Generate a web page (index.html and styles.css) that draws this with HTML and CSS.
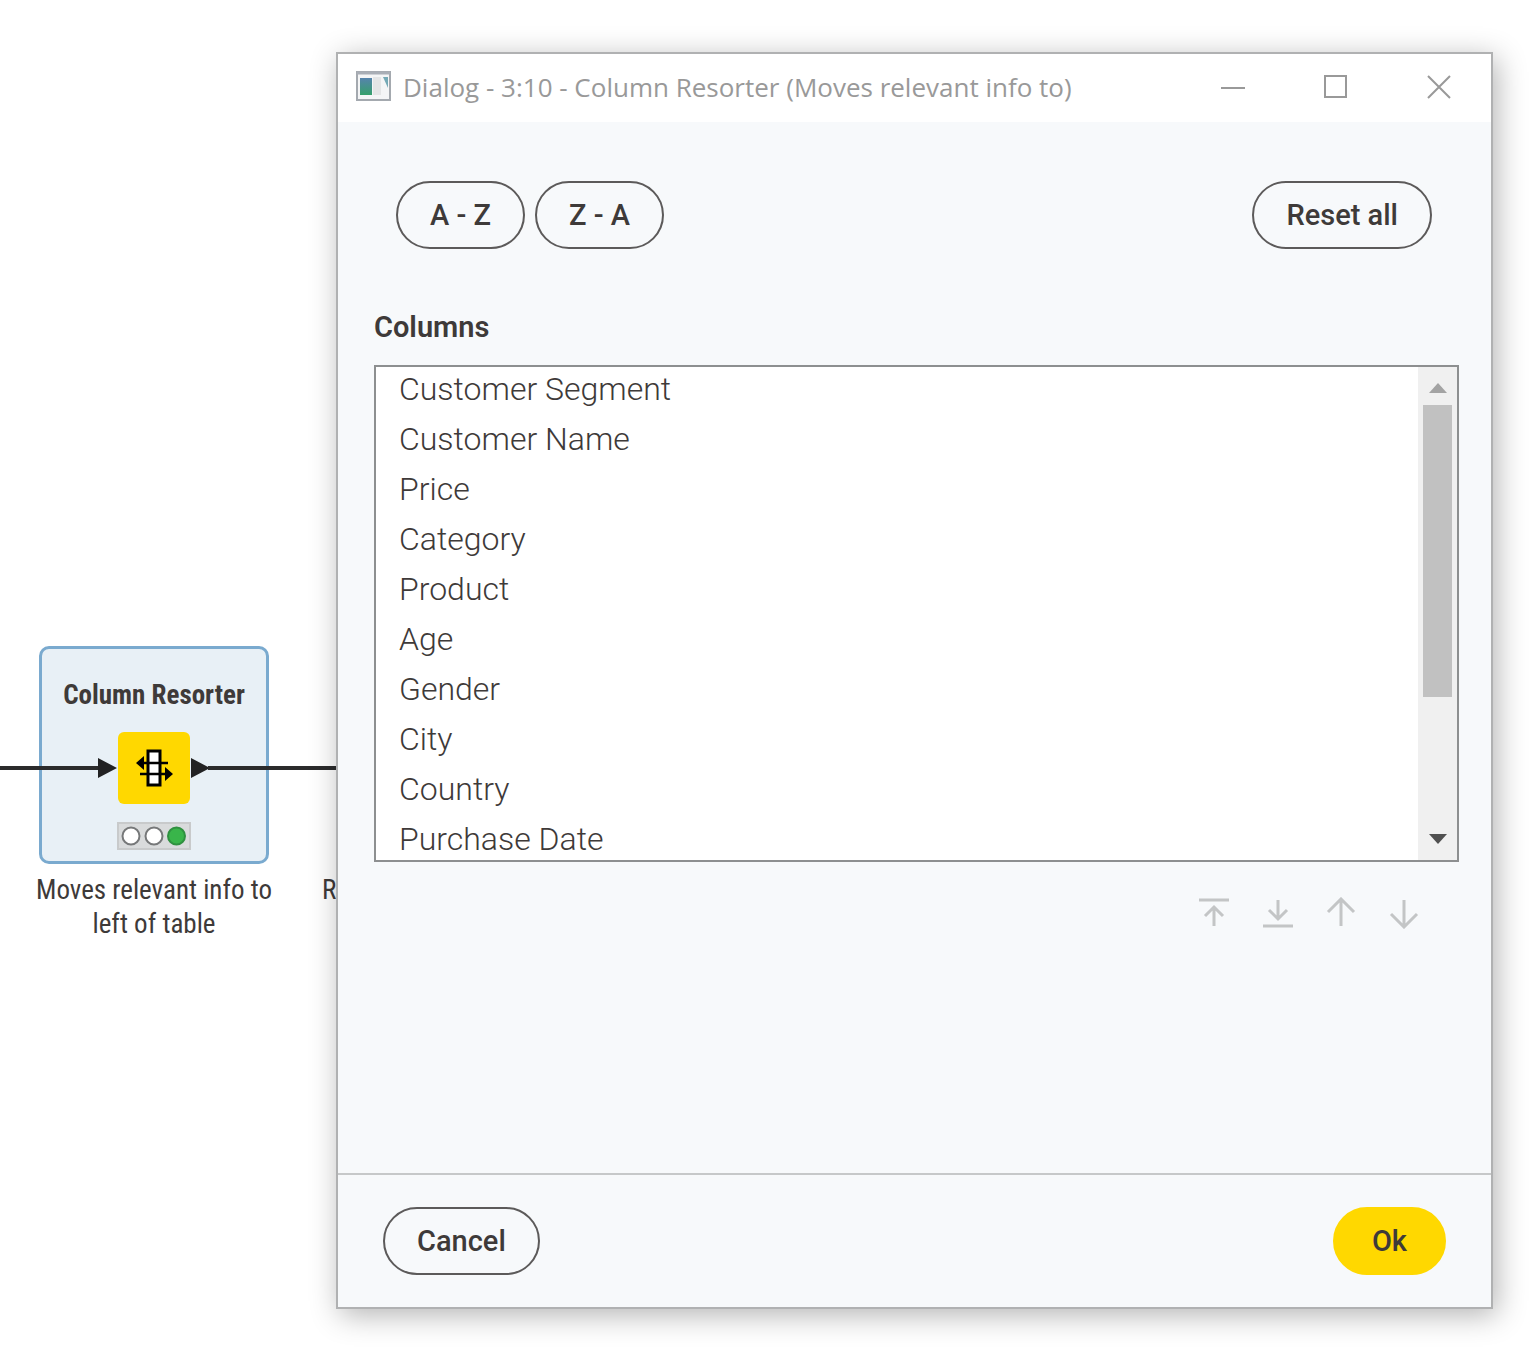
FILE: index.html
```html
<!DOCTYPE html>
<html lang="en">
<head>
<meta charset="utf-8">
<title>Column Resorter</title>
<link rel="stylesheet" href="styles.css">
</head>
<body>
<div class="workspace">
  <div class="canvas">
    <div class="node">
      <div class="node-box">
        <div class="node-name">Column Resorter</div>
        <svg class="node-icon" width="112" height="72" viewBox="0 0 112 72" aria-hidden="true">
          <path d="M0 26v20l19-10zM93 26v20l19-10z" fill="#222223"/>
          <rect x="20" width="72" height="72" rx="6" fill="#ffd800"/>
          <rect x="50" y="19" width="12" height="34" fill="#fff" stroke="#000" stroke-width="3"/>
          <path d="M44 31h26M42 42h27" stroke="#000" stroke-width="2.500"/>
          <path d="M38 31l8-7v14zM75 42l-8-7v14z" fill="#000"/>
        </svg>
        <svg class="node-status" width="74" height="28" viewBox="0 0 74 28" aria-hidden="true">
          <rect x="1" y="1" width="72" height="26" fill="#d9dbdc" stroke="#c8cacb" stroke-width="2"/>
          <g stroke="#767879" stroke-width="2" fill="#fff"><circle cx="14" cy="14" r="8.5"/><circle cx="37" cy="14" r="8.5"/><circle cx="59.500" cy="14" r="8.500" fill="#39b54a" stroke="#2f9140"/></g>
        </svg>
      </div>
      <p class="node-caption">Moves relevant info to<br>left of table</p>
    </div>
    <svg class="wire" width="100%" height="24" aria-hidden="true">
      <path d="M0 12H98M208 12H400" stroke="#2b2b2c" stroke-width="4"/>
    </svg>
    <p class="node-caption next-caption">R</p>
  </div>
  <section class="dialog" role="dialog" aria-labelledby="dialog-title">
    <header class="titlebar">
      <svg width="36" height="32" viewBox="0 0 36 32" aria-hidden="true">
        <defs><linearGradient id="pane" x2="0" y2="1"><stop stop-color="#5683ad"/><stop offset="1" stop-color="#35a06b"/></linearGradient></defs>
        <rect x="1" y="1" width="33" height="28" fill="#f4f5f6" stroke="#a4a9af" stroke-width="2"/>
        <path d="M1 2h33" stroke="#a9aeb6" stroke-width="3"/>
        <rect x="4" y="7" width="12" height="17" fill="url(#pane)"/>
        <rect x="17" y="6" width="8" height="18" fill="#e4e5e6"/>
        <path d="M27 6h5v11z" fill="#74a9b6"/>
      </svg>
      <h1 class="title" id="dialog-title">Dialog - 3:10 - Column Resorter (Moves relevant info to)</h1>
      <div class="window-controls">
        <button class="window-button" aria-label="Minimize"><svg width="24" height="24"><path d="M0 13h24" stroke="#999" stroke-width="2"/></svg></button>
        <button class="window-button" aria-label="Maximize"><svg width="24" height="24"><path d="M1 1h21v21H1z" fill="none" stroke="#999" stroke-width="2"/></svg></button>
        <button class="window-button" aria-label="Close"><svg width="24" height="24"><path d="M1 1l22 22M23 1L1 23" stroke="#999" stroke-width="2"/></svg></button>
      </div>
    </header>
    <main class="content">
      <div class="toolbar">
        <button class="button">A - Z</button>
        <button class="button">Z - A</button>
        <button class="button reset">Reset all</button>
      </div>
      <label class="list-label" for="columns">Columns</label>
      <div class="list-frame">
        <select class="list" id="columns" multiple size="10">
          <option>Customer Segment</option>
          <option>Customer Name</option>
          <option>Price</option>
          <option>Category</option>
          <option>Product</option>
          <option>Age</option>
          <option>Gender</option>
          <option>City</option>
          <option>Country</option>
          <option>Purchase Date</option>
        </select>
        <div class="scrollbar" aria-hidden="true">
          <svg width="18" height="10"><path d="M0 10L9 0l9 10z" fill="#a3a3a3"/></svg>
          <div class="track"><div class="thumb"></div></div>
          <svg width="18" height="10"><path d="M0 0h18L9 10z" fill="#505050"/></svg>
        </div>
      </div>
      <div class="move-buttons">
        <button class="move" aria-label="Move to top"><svg width="32" height="32"><path d="M0 3h30M15 29V11M6 19l9-9 9 9"/></svg></button>
        <button class="move" aria-label="Move to bottom"><svg width="32" height="32"><path d="M1 29h30M16 3v19M7 13l9 9 9-9"/></svg></button>
        <button class="move" aria-label="Move up"><svg width="32" height="32"><path d="M16 29V3M3 15L16 2l13 13"/></svg></button>
        <button class="move" aria-label="Move down"><svg width="32" height="32"><path d="M16 3v26M3 17l13 13 13-13"/></svg></button>
      </div>
    </main>
    <footer class="footer">
      <button class="button">Cancel</button>
      <button class="button primary">Ok</button>
    </footer>
  </section>
</div>
</body>
</html>
```
FILE: styles.css
```css
* { box-sizing: border-box; }
body {
  margin: 0;
  background: #fff;
  color: #3e3a39;
  font-family: Roboto, "Liberation Sans", sans-serif;
}
button { font: inherit; color: inherit; cursor: pointer; }
svg { display: block; flex: none; }

.workspace {
  position: relative;
  display: flex;
  min-height: 100vh;
  padding: 52px 43px 41px 336px;
  overflow: hidden;
}

/* workflow canvas behind the dialog */
.canvas { position: absolute; inset: 0; }
.wire { position: absolute; left: 0; top: 756px; }
.node {
  position: absolute;
  left: 4px;
  top: 646px;
  width: 300px;
  display: flex;
  flex-direction: column;
  align-items: center;
}
.node-box {
  width: 230px;
  height: 218px;
  padding-top: 28px;
  display: flex;
  flex-direction: column;
  align-items: center;
  border: 3px solid #7aaacf;
  border-radius: 10px;
  background: #e8f0f6;
}
.node-name {
  font: bold 27px/36px "Roboto Condensed", "Liberation Sans Narrow", Roboto, sans-serif;
  white-space: nowrap;
}
.node-icon { margin-top: 19px; }
.node-status { margin-top: 18px; }
.node-caption {
  margin: 9px 0 0;
  font: 27px/34px "Roboto Condensed", "Liberation Sans Narrow", Roboto, sans-serif;
  text-align: center;
  white-space: nowrap;
}
.next-caption { position: absolute; left: 322px; top: 864px; }

/* dialog window */
.dialog {
  position: relative;
  flex: 1;
  min-width: 0;
  display: flex;
  flex-direction: column;
  border: 2px solid #b0b1b2;
  background: #f7f9fb;
  box-shadow: 4px 6px 28px rgba(0, 0, 0, 0.3);
}
.titlebar {
  height: 68px;
  padding: 0 36px 2px 18px;
  display: flex;
  align-items: center;
  gap: 11px;
  background: #fff;
}
.title {
  margin: 0;
  flex: 1;
  color: #999;
  font: 26px/36px "Open Sans", "Noto Sans", sans-serif;
  white-space: nowrap;
}
.window-controls { display: flex; gap: 71px; }
.window-button { padding: 4px; border: 0; background: none; }
.window-button, .move { flex: none; }

.content { flex: 1; padding: 59px 32px 0 36px; }
.toolbar { display: flex; gap: 10px; padding: 0 27px 0 22px; }
.button {
  height: 68px;
  padding: 0 32px;
  border: 2px solid #5c5a5a;
  border-radius: 34px;
  background: none;
  font-size: 29px;
  font-weight: 500;
  line-height: 32px;
}
.reset { margin-left: auto; }
.list-label {
  display: block;
  margin: 60px 0 20px;
  font-size: 29px;
  font-weight: 600;
  line-height: 36px;
}
.list-frame {
  display: flex;
  height: 497px;
  border: 2px solid #8d8f90;
  background: #fff;
}
.list {
  flex: 1;
  min-width: 0;
  height: 100%;
  padding: 0;
  border: 0;
  outline: 0;
  background: none;
  color: inherit;
  font: 300 32px/36px Roboto, sans-serif;
  scrollbar-width: none;
}
.list option { height: 50px; padding: 3px 23px 11px; font-weight: 300; }
.scrollbar {
  width: 39px;
  padding: 16px 0;
  display: flex;
  flex-direction: column;
  align-items: center;
  background: #f0f0f0;
}
.track { flex: 1; width: 29px; margin: 12px 0; }
.thumb { height: 70%; background: #c1c1c1; }

.move-buttons {
  display: flex;
  justify-content: flex-end;
  gap: 31px;
  padding: 35px 39px 35px 0;
}
.move { padding: 0; border: 0; background: none; }
.move svg { fill: none; stroke: #c3c5c6; stroke-width: 3; }

.footer {
  display: flex;
  justify-content: space-between;
  padding: 32px 45px;
  border-top: 2px solid #c6c8c9;
}
.primary { padding: 0 37px; border-color: #ffd800; background: #ffd800; }
```
